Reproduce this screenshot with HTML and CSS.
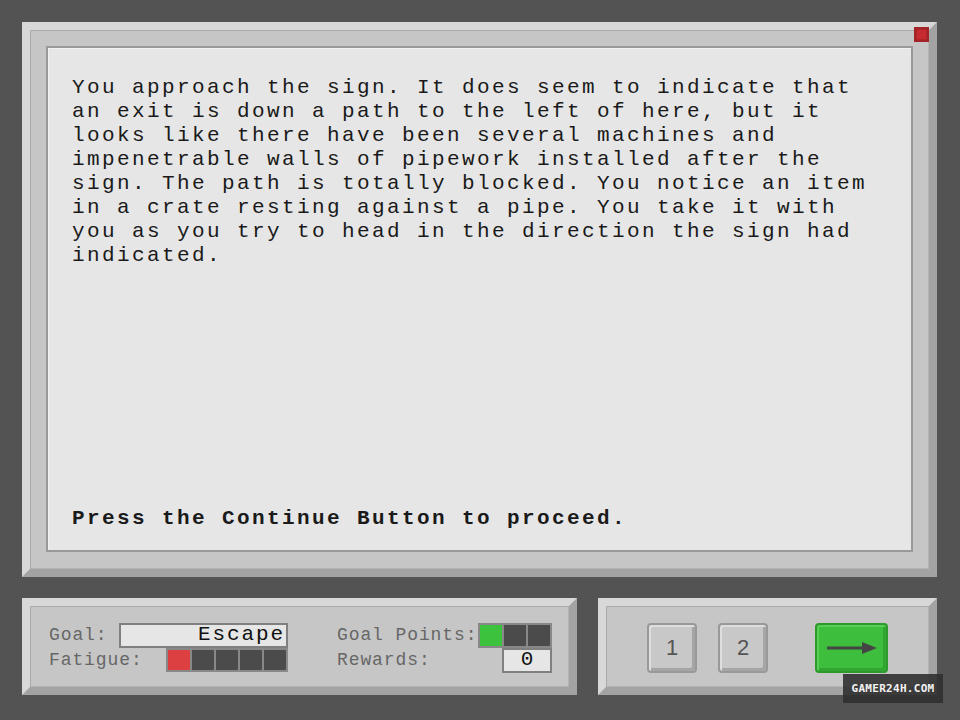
FILE: index.html
```html
<!DOCTYPE html>
<html lang="en">
<head>
    <meta charset="UTF-8">
    <meta name="viewport" content="width=device-width, initial-scale=1.0">
    <title>Escape</title>
    <link rel="stylesheet" href="styles.css">
</head>
<body>
    <div class="screen">
        <div class="panel story">
            <span class="close-btn"></span>
            <div class="story-box">
                <p class="narrative">You approach the sign. It does seem to indicate that<br>an exit is down a path to the left of here, but it<br>looks like there have been several machines and<br>impenetrable walls of pipework installed after the<br>sign. The path is totally blocked. You notice an item<br>in a crate resting against a pipe. You take it with<br>you as you try to head in the direction the sign had<br>indicated.</p>
                <p class="prompt">Press the Continue Button to proceed.</p>
            </div>
        </div>

        <div class="bottom-row">
            <div class="panel status">
                <div class="stat-group left">
                    <div class="stat-row">
                        <span class="label">Goal:</span>
                        <span class="field goal-field">Escape</span>
                    </div>
                    <div class="stat-row">
                        <span class="label">Fatigue:</span>
                        <span class="meter">
                            <span class="cell red"></span>
                            <span class="cell"></span>
                            <span class="cell"></span>
                            <span class="cell"></span>
                            <span class="cell"></span>
                        </span>
                    </div>
                </div>
                <div class="stat-group right">
                    <div class="stat-row">
                        <span class="label">Goal Points:</span>
                        <span class="meter">
                            <span class="cell green"></span>
                            <span class="cell"></span>
                            <span class="cell"></span>
                        </span>
                    </div>
                    <div class="stat-row">
                        <span class="label">Rewards:</span>
                        <span class="field reward-field">0</span>
                    </div>
                </div>
            </div>

            <div class="panel controls">
                <button type="button" class="key">1</button>
                <button type="button" class="key">2</button>
                <button type="button" class="key continue">
                    <svg width="52" height="14" viewBox="0 0 52 14">
                        <line x1="1" y1="7" x2="38" y2="7" stroke="#454545" stroke-width="3"/>
                        <polygon points="36,1 51,7 36,13" fill="#454545"/>
                    </svg>
                </button>
            </div>
        </div>

        <div class="watermark">GAMER24H.COM</div>
    </div>
</body>
</html>
```

FILE: styles.css
```css
* {
    box-sizing: border-box;
}
body {
    margin: 0;
    background-color: #535353;
    font-family: "Liberation Mono", "Courier New", monospace;
}
.screen {
    position: relative;
    width: 960px;
    height: 720px;
    padding: 22px 0 0 22px;
}

/* bevelled grey frame shared by all panels */
.panel {
    position: relative;
    background-color: #c6c6c6;
    border: 8px solid;
    border-color: #d8d8d8 #a3a3a3 #a3a3a3 #d8d8d8;
    box-shadow: inset 1px 1px 0 #a9a9a9, inset -1px -1px 0 #b4b4b4;
}

.story {
    width: 915px;
    height: 555px;
    padding: 16px 16px 17px 16px;
    display: flex;
}
.close-btn {
    position: absolute;
    top: -3px;
    right: 0;
    width: 15px;
    height: 15px;
    background-color: #c62a2e;
    border: 2px solid #a32428;
    box-shadow: inset 0 0 0 1px #b02428;
}
.story-box {
    flex: 1;
    display: flex;
    flex-direction: column;
    background-color: #e6e6e6;
    border: 2px solid #999;
    box-shadow: inset 1px 1px 0 #f2f2f2;
    padding: 28px 0 19px 24px;
}
.narrative,
.prompt {
    margin: 0;
    font-size: 21px;
    line-height: 24px;
    letter-spacing: 2.4px;
    color: #1a1a1a;
    white-space: nowrap;
}
.prompt {
    margin-top: auto;
    font-weight: bold;
}

.bottom-row {
    display: flex;
    gap: 21px;
    margin-top: 21px;
}

.status {
    width: 555px;
    height: 97px;
    display: flex;
    padding: 17px 0 0 19px;
}
.stat-group.left {
    width: 239px;
}
.stat-group.right {
    width: 215px;
    margin-left: 49px;
}
.stat-row {
    display: flex;
    align-items: flex-start;
    height: 25px;
}
.label {
    font-size: 18px;
    line-height: 25px;
    letter-spacing: 0.9px;
    color: #676767;
}
.field {
    display: block;
    height: 25px;
    background-color: #e6e6e6;
    border: 2px solid #808080;
    font-size: 21px;
    line-height: 20px;
    color: #111;
}
.goal-field {
    width: 169px;
    margin-left: auto;
    text-align: right;
    letter-spacing: 1.9px;
    padding-right: 1px;
}
.reward-field {
    width: 50px;
    margin-left: auto;
    text-align: center;
}
.meter {
    display: flex;
    gap: 2px;
    padding: 2px;
    margin-left: auto;
    background-color: #888;
}
.meter .cell {
    width: 22px;
    height: 20px;
    background-color: #4b4b4b;
}
.stat-group.right .meter .cell {
    height: 21px;
}
.meter .cell.red {
    background-color: #dc4040;
}
.meter .cell.green {
    background-color: #3cc23c;
}

.controls {
    width: 339px;
    height: 97px;
    display: flex;
    align-items: flex-start;
    padding: 17px 0 0 41px;
}
.key {
    width: 50px;
    height: 50px;
    margin: 0 21px 0 0;
    padding: 0;
    background-color: #c8c8c8;
    border: 2px solid #999;
    border-radius: 4px;
    box-shadow: inset 2px 2px 0 #dedede, inset -3px -3px 0 #a6a6a6;
    font-family: "Liberation Sans", Arial, sans-serif;
    font-size: 22px;
    color: #555;
    cursor: pointer;
}
.key.continue {
    width: 73px;
    margin: 0 0 0 26px;
    background-color: #3dbf3d;
    border-color: #2e9a2e;
    box-shadow: inset 2px 2px 0 #55cf55, inset -3px -3px 0 #31a731;
    display: flex;
    align-items: center;
    justify-content: center;
}
.key.continue svg {
    display: block;
}

.watermark {
    position: absolute;
    left: 843px;
    top: 674px;
    width: 100px;
    height: 29px;
    background-color: rgba(48, 48, 48, 0.9);
    color: #f2f2f2;
    font-family: "DejaVu Sans Mono", monospace;
    font-weight: bold;
    font-size: 11px;
    line-height: 29px;
    letter-spacing: 0.3px;
    text-align: center;
}
```
